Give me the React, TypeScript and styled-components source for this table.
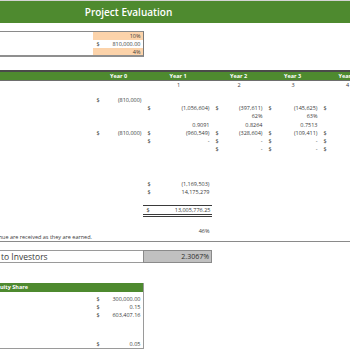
import styled, { createGlobalStyle } from "styled-components";

const GREEN = "#4e8a2f";
const COLS = "93px 51px 68px 53px 55px 54px";

type Val = { d?: boolean; v?: string } | null;
const m = (v = ""): Val => ({ d: true, v });
const p = (v: string): Val => ({ v });

// cash flow block, columns Year 0 .. Year 4
const flows: Val[][] = [
  [m("(810,000)"), null, null, null, null],
  [null, m("(1,056,604)"), m("(397,611)"), m("(145,625)"), m()],
  [null, null, p("62%"), p("63%"), null],
  [null, p("0.9091"), p("0.8264"), p("0.7513"), null],
  [m("(810,000)"), m("(960,549)"), m("(328,604)"), m("(109,411)"), m()],
  [null, m("-"), m("-"), m("-"), m()],
  [null, null, m("-"), m("-"), m()],
];

const totals: Val[][] = [
  [null, m("(1,169,503)"), null, null, null],
  [null, m("14,175,279"), null, null, null],
];

const equity: Val[] = [m("300,000.00"), m("0.15"), m("603,407.16")];

const App = () => {
  return (
    <>
      <GlobalStyle />
      <Sheet>
        <TitleBar>
          <Title>Project Evaluation</Title>
        </TitleBar>

        <Spacer $h={8} />
        <InputBox>
          <Blank />
          <Cell $fill="#fcd3aa">10%</Cell>
          <Blank />
          <ValCell val={m("810,000.00")} />
          <Blank />
          <Cell $fill="#fcd3aa">4%</Cell>
        </InputBox>

        <Spacer $h={13} />
        <HeaderBand>
          <Blank />
          {[0, 1, 2, 3, 4].map((y) => (
            <HeadCell key={y}>Year {y}</HeadCell>
          ))}
        </HeaderBand>
        <Row $h={8}>
          <Blank />
          <Blank />
          {[1, 2, 3, 4].map((y) => (
            <Cell key={y} $align="center">
              {y}
            </Cell>
          ))}
        </Row>

        <Spacer $h={7} />
        {flows.map((r, i) => (
          <Row key={i} $h={8.2}>
            <Blank />
            {r.map((c, j) => (
              <ValCell key={j} val={c} />
            ))}
          </Row>
        ))}

        <Spacer $h={26.6} />
        {totals.map((r, i) => (
          <Row key={i} $h={8.2}>
            <Blank />
            {r.map((c, j) => (
              <ValCell key={j} val={c} />
            ))}
          </Row>
        ))}

        <Spacer $h={8.6} />
        <Row $h={12}>
          <Blank />
          <Blank />
          <TotalCell>
            <span>$</span>
            <span>13,005,776.25</span>
          </TotalCell>
        </Row>

        <Spacer $h={10} />
        <Row $h={7}>
          <Blank />
          <Blank />
          <Cell>46%</Cell>
        </Row>
        <NoteRow>
          <NoteCell>
            <span>Assumes all revenue are received as they are earned.</span>
          </NoteCell>
        </NoteRow>

        <Spacer $h={8} />
        <Row $h={11}>
          <InvestorLabel>to Investors</InvestorLabel>
          <RateCell>2.3067%</RateCell>
        </Row>

        <Spacer $h={22} />
        <EquityBox>
          <EquityHead>uity Share</EquityHead>
          <Spacer $h={3} />
          {equity.map((c, i) => (
            <EquityRow key={i}>
              <Blank />
              <ValCell val={c} />
            </EquityRow>
          ))}
          <Spacer $h={21} />
          <EquityRow>
            <Blank />
            <ValCell val={m("0.05")} />
          </EquityRow>
        </EquityBox>
      </Sheet>
    </>
  );
};

const ValCell = ({ val }: { val: Val }) => {
  if (!val) return <Blank />;
  if (!val.d) return <Cell>{val.v}</Cell>;
  return (
    <Cell $align="split">
      <span>$</span>
      <span>{val.v}</span>
    </Cell>
  );
};

export default App;

const GlobalStyle = createGlobalStyle`
  html, body {
    margin: 0;
    padding: 0;
    background: #ffffff;
  }
  body {
    width: 350px;
    height: 350px;
    overflow: hidden;
    font-family: "Open Sans", "Liberation Sans", sans-serif;
    color: #3a3a3a;
  }
`;

const Sheet = styled.div`
  width: 374px;
  display: flex;
  flex-direction: column;
`;

const Spacer = styled.div<{ $h: number }>`
  height: ${(p) => p.$h}px;
  flex-shrink: 0;
`;

const TitleBar = styled.div`
  height: 22px;
  border-top: 1px solid #d4d4d4;
  background: ${GREEN};
  display: grid;
  grid-template-columns: ${COLS};
  align-items: center;
`;

const Title = styled.div`
  grid-column: 1 / 5;
  padding-right: 8px;
  text-align: center;
  color: #ffffff;
  font-size: 10px;
  font-weight: 600;
`;

const Row = styled.div<{ $h: number }>`
  display: grid;
  grid-template-columns: ${COLS};
  height: ${(p) => p.$h}px;
`;

const Blank = styled.div``;

const Cell = styled.div<{ $align?: "right" | "center" | "split"; $fill?: string }>`
  display: flex;
  align-items: center;
  justify-content: ${(p) =>
    p.$align === "center" ? "center" : p.$align === "split" ? "space-between" : "flex-end"};
  padding: 0 2.5px 0 3.5px;
  font-size: 5.5px;
  white-space: nowrap;
  background: ${(p) => p.$fill ?? "transparent"};
`;

const InputBox = styled.div`
  width: 143px;
  display: grid;
  grid-template-columns: 93px 50px;
  grid-template-rows: 8px 8px 7px;
  border-top: 1px solid #8a8a8a;
  border-right: 1px solid #7a7a7a;
  border-bottom: 2px solid #8f8f8f;
`;

const HeaderBand = styled.div`
  display: grid;
  grid-template-columns: ${COLS};
  height: 8px;
  background: ${GREEN};
  border-top: 2px solid #4a4a4a;
  border-bottom: 1px solid #6e6e6e;
`;

const HeadCell = styled.div`
  display: flex;
  align-items: center;
  justify-content: center;
  color: #ffffff;
  font-size: 5.5px;
  font-weight: 700;
`;

const TotalCell = styled.div`
  display: flex;
  align-items: center;
  justify-content: space-between;
  margin-left: -1px;
  padding: 0 1.5px 0 3.5px;
  font-size: 5.5px;
  border-top: 1px solid #3a3a3a;
  border-bottom: 3px double #3a3a3a;
`;

const NoteRow = styled.div`
  display: grid;
  grid-template-columns: ${COLS};
  height: 7px;
  border-bottom: 1.5px solid #8a8a8a;
`;

const NoteCell = styled.div`
  display: flex;
  align-items: center;
  justify-content: flex-end;
  overflow: hidden;
  padding-right: 1px;
  font-size: 5.5px;
  white-space: nowrap;
`;

const InvestorLabel = styled.div`
  grid-column: 1 / 3;
  display: flex;
  align-items: center;
  padding-left: 1px;
  font-size: 8.5px;
  border-top: 1px solid #9a9a9a;
  border-bottom: 1px solid #9a9a9a;
`;

const RateCell = styled.div`
  display: flex;
  align-items: center;
  justify-content: flex-end;
  margin-left: -1px;
  padding-right: 2px;
  background: #c0c0c0;
  border: 1px solid #8a8a8a;
  font-size: 7px;
  color: #2e2e2e;
`;

const EquityBox = styled.div`
  width: 143px;
  display: flex;
  flex-direction: column;
  border-right: 1px solid #9a9a9a;
  border-bottom: 1px solid #9a9a9a;
`;

const EquityHead = styled.div`
  height: 9px;
  display: flex;
  align-items: center;
  background: ${GREEN};
  color: #ffffff;
  font-size: 5.5px;
  font-weight: 700;
`;

const EquityRow = styled.div`
  display: grid;
  grid-template-columns: 93px 50px;
  height: 8px;
`;
